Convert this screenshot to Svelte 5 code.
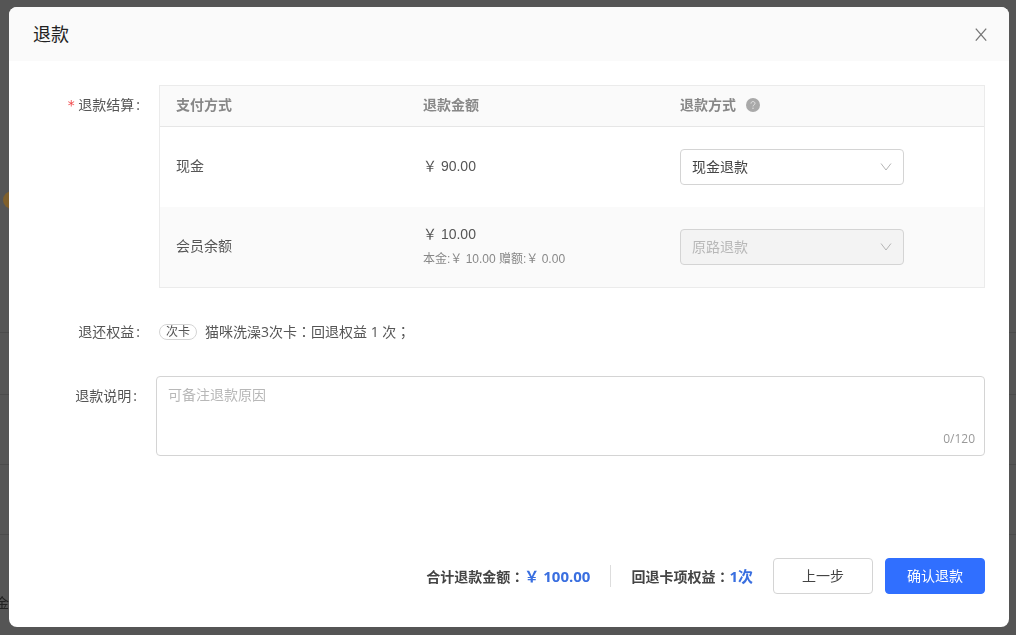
<script lang="ts">

    interface Payment {
        id: string;
        name: string;
        amount: string;
        detail?: string;
        options: string[];
        method: string;
        disabled: boolean;
    }

    const maxLength = 120;

    let payments: Payment[] = [
        {
            id: 'cash',
            name: '现金',
            amount: '90.00',
            options: ['现金退款', '原路退款'],
            method: '现金退款',
            disabled: false,
        },
        {
            id: 'balance',
            name: '会员余额',
            amount: '10.00',
            detail: '本金:￥ 10.00 赠额:￥ 0.00',
            options: ['原路退款'],
            method: '原路退款',
            disabled: true,
        },
    ];

    let remark = '';
    let opened = true;

    function close() {
        opened = false;
    }
</script>

<div class="page" aria-hidden="true">
    <div class="page-row page-top"><span class="page-badge"></span></div>
    <div class="page-row"></div>
    <div class="page-row page-row-high"></div>
    <div class="page-row page-row-high"></div>
    <div class="page-row page-last"><span class="page-text">现金</span></div>
</div>

{#if opened}
<div class="overlay">
    <div class="dialog" role="dialog" aria-modal="true" aria-labelledby="dialog-title">
        <header class="dialog-header">
            <h2 class="dialog-title" id="dialog-title">退款</h2>
            <button class="close-btn" type="button" aria-label="关闭" on:click={close}>
                <svg width="14" height="14" viewBox="0 0 14 14" fill="none" stroke="#777" stroke-width="1.3">
                    <path d="M1.8 1.6 12.2 13.6M12.2 1.6 1.8 13.6" />
                </svg>
            </button>
        </header>

        <div class="dialog-body">
            <div class="field">
                <div class="field-label" id="settle-label"><span class="required">*</span>退款结算<span class="mark">:</span></div>
                <div class="table-box">
                    <table class="pay-table" aria-labelledby="settle-label">
                        <thead>
                            <tr>
                                <th class="col-name">支付方式</th>
                                <th>退款金额</th>
                                <th class="col-method">
                                    <span class="th-inner">
                                        退款方式
                                        <svg width="14" height="14" viewBox="0 0 14 14">
                                            <circle cx="7" cy="7" r="7" fill="#a9a9a9" />
                                            <path d="M5 5.6C5 4.3 5.9 3.6 7 3.6s2 .7 2 1.8c0 1.4-2 1.5-2 3" fill="none" stroke="#e4e4e4" />
                                            <circle cx="7" cy="10.2" r="0.7" fill="#e4e4e4" />
                                        </svg>
                                    </span>
                                </th>
                            </tr>
                        </thead>
                        <tbody>
                            {#each payments as payment}
                                <tr>
                                    <td>{payment.name}</td>
                                    <td>
                                        <p class="amount">￥ {payment.amount}</p>
                                        {#if payment.detail}
                                            <p class="amount-detail">{payment.detail}</p>
                                        {/if}
                                    </td>
                                    <td class="cell-method">
                                        <div class="select-box">
                                            <select class="select" aria-label="{payment.name}退款方式" id={payment.id} bind:value={payment.method} disabled={payment.disabled}>
                                                {#each payment.options as option}
                                                    <option value={option}>{option}</option>
                                                {/each}
                                            </select>
                                            <svg class="select-arrow" width="12" height="8" viewBox="0 0 12 8" fill="none" stroke="#b4b4b4">
                                                <path d="M1 0.5 6 7 11 0.5" />
                                            </svg>
                                        </div>
                                    </td>
                                </tr>
                            {/each}
                        </tbody>
                    </table>
                </div>
            </div>

            <div class="field">
                <div class="field-label">退还权益<span class="mark">:</span></div>
                <div class="benefit">
                    <span class="tag">次卡</span>
                    <span>猫咪洗澡3次卡<span class="wide">：</span>回退权益 1 次<span class="wide">；</span></span>
                </div>
            </div>

            <div class="field field-remark">
                <label class="field-label" for="remark">退款说明<span class="mark">:</span></label>
                <div class="remark-box">
                    <textarea class="remark" id="remark" placeholder="可备注退款原因" maxlength={maxLength} bind:value={remark}></textarea>
                    <span class="counter">{remark.length}/{maxLength}</span>
                </div>
            </div>
        </div>

        <footer class="dialog-footer">
            <p class="total">合计退款金额<span class="wide">：</span><span class="total-value">￥ 100.00</span></p>
            <span class="divider"></span>
            <p class="total">回退卡项权益<span class="wide">：</span><span class="total-value">1次</span></p>
            <div class="buttons">
                <button class="btn" type="button">上一步</button>
                <button class="btn btn-primary" type="button">确认退款</button>
            </div>
        </footer>
    </div>
</div>
{/if}

<style>
    :global(body) {
        margin: 0;
        background-color: #555;
        font-family: "Open Sans", "Noto Sans CJK SC", sans-serif;
        font-size: 14px;
        line-height: 20px;
        color: #555;
    }

    p, h2 {
        margin: 0;
    }

    button, select, textarea {
        font: inherit;
    }

    .page {
        position: fixed;
        inset: 0;
        display: flex;
        flex-direction: column;
        overflow: hidden;
    }

    .page-row {
        box-sizing: border-box;
        flex: none;
        height: 62px;
        border-bottom: 1px solid #4b4b4b;
    }

    .page-row-high {
        height: 70px;
    }

    .page-top {
        height: 333px;
        padding: 191px 0 0 3px;
    }

    .page-badge {
        display: block;
        width: 18px;
        height: 18px;
        border-radius: 50%;
        background-color: #80602c;
    }

    .page-last {
        display: flex;
        justify-content: flex-end;
        width: 9px;
        height: 100px;
        padding-top: 58px;
        border: none;
        overflow: hidden;
    }

    .page-text {
        flex: none;
        color: #222;
    }

    .overlay {
        position: relative;
        box-sizing: border-box;
        display: flex;
        min-height: 100vh;
        padding: 7px 7px 8px 9px;
    }

    .dialog {
        flex: 1;
        display: flex;
        flex-direction: column;
        background-color: #fff;
        border-radius: 8px;
        overflow: hidden;
    }

    .dialog-header {
        display: flex;
        align-items: center;
        justify-content: space-between;
        height: 54px;
        padding: 0 19px 0 24px;
        background-color: #fafafa;
    }

    .dialog-title {
        font-size: 18px;
        font-weight: 400;
        line-height: 28px;
        color: #222;
    }

    .close-btn {
        display: flex;
        padding: 2px;
        border: none;
        background: none;
        cursor: pointer;
    }

    .dialog-body {
        display: flex;
        flex-direction: column;
        gap: 34px;
        padding: 24px;
    }

    .field {
        display: flex;
        gap: 17px;
    }

    .field-label {
        flex: none;
        width: 109px;
        text-align: right;
        white-space: nowrap;
    }

    .field:first-child .field-label,
    .field-remark .field-label {
        padding-top: 10px;
    }

    .field-remark .field-label {
        width: 106px;
    }

    .required {
        margin-right: 3px;
        font-family: "DejaVu Sans Mono", monospace;
        color: #f0484a;
    }

    .mark {
        margin: 0 2px;
    }

    .wide {
        font-family: "Noto Sans CJK TC", sans-serif;
        line-height: 14px;
    }

    .table-box {
        flex: 1;
        border: 1px solid #ebebeb;
    }

    .pay-table {
        width: 100%;
        table-layout: fixed;
        border-collapse: collapse;
    }

    .pay-table th {
        height: 38px;
        padding: 0 16px 2px;
        text-align: left;
        font-weight: 700;
        color: #888;
        background-color: #fafafa;
        border-bottom: 1px solid #e6e6e6;
    }

    .pay-table td {
        box-sizing: border-box;
        height: 80px;
        padding: 0 16px 1px;
    }

    .pay-table .cell-method {
        padding-bottom: 0;
    }

    .pay-table tbody tr:nth-child(even) {
        background-color: #fafafa;
    }

    .col-name {
        width: 215px;
    }

    .col-method {
        width: 288px;
    }

    .th-inner {
        display: flex;
        align-items: center;
        gap: 10px;
    }

    .amount, .amount-detail {
        font-family: "Liberation Sans", "Noto Sans CJK SC", sans-serif;
    }

    .amount-detail {
        margin-top: 5px;
        font-size: 12px;
        color: #888;
        white-space: nowrap;
    }

    .select-box {
        position: relative;
        width: 224px;
    }

    .select {
        display: block;
        width: 100%;
        height: 36px;
        padding: 0 32px 0 11px;
        appearance: none;
        color: #444;
        background-color: #fff;
        border: 1px solid #d4d4d4;
        border-radius: 4px;
    }

    .select:disabled {
        color: #b8b8b8;
        background-color: #f3f3f3;
        opacity: 1;
    }

    .select-arrow {
        position: absolute;
        top: 14px;
        right: 12px;
        pointer-events: none;
    }

    .benefit {
        display: flex;
        align-items: center;
        gap: 8px;
    }

    .tag {
        padding: 0 6px;
        font-size: 12px;
        line-height: 14px;
        border: 1px solid #d4d4d4;
        border-radius: 8px;
    }

    .remark-box {
        position: relative;
        flex: 1;
    }

    .remark {
        box-sizing: border-box;
        display: block;
        width: 100%;
        height: 80px;
        padding: 8px 11px;
        color: #444;
        border: 1px solid #d4d4d4;
        border-radius: 4px;
        resize: none;
        outline: none;
    }

    .remark::placeholder {
        color: #b8b8b8;
    }

    .counter {
        position: absolute;
        right: 10px;
        bottom: 7px;
        font-size: 12px;
        color: #999;
    }

    .dialog-footer {
        display: flex;
        align-items: center;
        justify-content: flex-end;
        gap: 20px;
        margin-top: auto;
        padding: 0 24px 33px;
    }

    .total {
        font-weight: 700;
        color: #444;
    }

    .total-value {
        font-size: 15px;
        color: #3a6fe0;
    }

    .divider {
        width: 1px;
        height: 22px;
        background-color: #ddd;
    }

    .buttons {
        display: flex;
        gap: 12px;
    }

    .btn {
        width: 100px;
        height: 36px;
        padding: 0;
        color: #444;
        background-color: #fff;
        border: 1px solid #d4d4d4;
        border-radius: 4px;
        cursor: pointer;
    }

    .btn-primary {
        color: #fff;
        background-color: #306fff;
        border-color: #306fff;
    }
</style>
